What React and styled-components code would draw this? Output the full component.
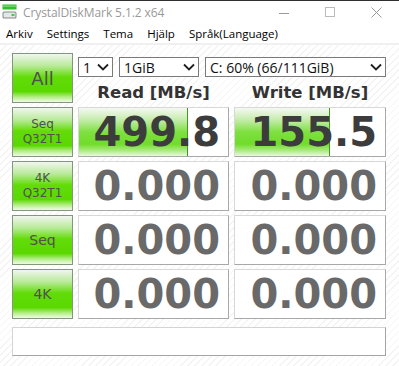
import styled, { createGlobalStyle } from "styled-components";

const GlobalStyle = createGlobalStyle`
  html, body {
    margin: 0;
    padding: 0;
    background: #ffffff;
    overflow: hidden;
  }
`;

const rows = [
  { label: ["Seq", "Q32T1"], read: "499.8", readPct: 73, write: "155.5", writePct: 63 },
  { label: ["4K", "Q32T1"], read: "0.000", readPct: 0, write: "0.000", writePct: 0 },
  { label: ["Seq"], read: "0.000", readPct: 0, write: "0.000", writePct: 0 },
  { label: ["4K"], read: "0.000", readPct: 0, write: "0.000", writePct: 0 },
];

const App = () => {
  return (
    <Window>
      <GlobalStyle />
      <TitleBar>
        <AppIcon viewBox="0 0 16 16">
          <rect x="0.5" y="0.5" width="14" height="5" fill="#2fbf2f" />
          <rect x="0.5" y="1.5" width="14" height="1.2" fill="#7fe07f" />
          <rect x="0.5" y="7.5" width="14" height="7" rx="1.5" fill="#8a8a8a" />
          <rect x="1.5" y="8.5" width="12" height="5" rx="1" fill="#e6e6e6" />
          <rect x="9.5" y="10" width="3" height="2" fill="#3ccf3c" />
        </AppIcon>
        <Title>CrystalDiskMark 5.1.2 x64</Title>
        <Controls>
          <CtrlBtn>
            <svg width="11" height="11" viewBox="0 0 11 11">
              <line x1="0" y1="6.5" x2="10" y2="6.5" stroke="#999" strokeWidth="1" />
            </svg>
          </CtrlBtn>
          <CtrlBtn>
            <svg width="11" height="11" viewBox="0 0 11 11">
              <rect x="0.5" y="0.5" width="9" height="9" fill="none" stroke="#bbb" strokeWidth="1" />
            </svg>
          </CtrlBtn>
          <CtrlBtn>
            <svg width="11" height="11" viewBox="0 0 11 11">
              <path d="M0.5 0.5 L10.5 10.5 M10.5 0.5 L0.5 10.5" stroke="#999" strokeWidth="1" />
            </svg>
          </CtrlBtn>
        </Controls>
      </TitleBar>
      <MenuBar>
        <MenuItem>Arkiv</MenuItem>
        <MenuItem>Settings</MenuItem>
        <MenuItem>Tema</MenuItem>
        <MenuItem>Hjälp</MenuItem>
        <MenuItem>Språk(Language)</MenuItem>
      </MenuBar>
      <Main>
        <Grid>
          <TestButton $size={18}>All</TestButton>
          <HeadArea>
            <Pickers>
              <Picker $w={35}>
                <span>1</span>
                <Chevron />
              </Picker>
              <Picker $w={80}>
                <span>1GiB</span>
                <Chevron />
              </Picker>
              <Picker $w={181}>
                <span>C: 60% (66/111GiB)</span>
                <Chevron />
              </Picker>
            </Pickers>
            <Heads>
              <Head>Read [MB/s]</Head>
              <Head>Write [MB/s]</Head>
            </Heads>
          </HeadArea>
          {rows.map((r, i) => (
            <Row key={i} r={r} />
          ))}
        </Grid>
        <StatusBar />
      </Main>
    </Window>
  );
};

const Row = ({ r }) => (
  <>
    <TestButton $size={r.label.length > 1 ? 12 : 14}>
      {r.label.map((l) => (
        <span key={l}>{l}</span>
      ))}
    </TestButton>
    <ValueBox>
      {r.readPct > 0 && <Fill style={{ width: `${r.readPct}%` }} />}
      <Value $active={r.readPct > 0}>{r.read}</Value>
    </ValueBox>
    <ValueBox>
      {r.writePct > 0 && <Fill style={{ width: `${r.writePct}%` }} />}
      <Value $active={r.writePct > 0}>{r.write}</Value>
    </ValueBox>
  </>
);

const Chevron = () => (
  <ChevronSvg width="12" height="8" viewBox="0 0 12 8">
    <path d="M1 1.5 L6 6.5 L11 1.5" fill="none" stroke="#1e1e1e" strokeWidth="1.8" />
  </ChevronSvg>
);

export default App;

const Window = styled.div`
  width: 399px;
  height: 366px;
  display: flex;
  flex-direction: column;
  background: #fff;
  font-family: "Open Sans", "Noto Sans", sans-serif;
`;

const TitleBar = styled.div`
  height: 23px;
  border-top: 1px solid #2f2f2f;
  display: flex;
  align-items: center;
  padding-left: 2px;
  box-sizing: border-box;
`;

const AppIcon = styled.svg`
  width: 16px;
  height: 16px;
`;

const Title = styled.div`
  margin-left: 5px;
  font-size: 12px;
  color: #999;
  letter-spacing: -0.1px;
`;

const Controls = styled.div`
  margin-left: auto;
  display: flex;
  height: 100%;
`;

const CtrlBtn = styled.div`
  width: 46px;
  display: flex;
  align-items: center;
  justify-content: center;
`;

const MenuBar = styled.div`
  height: 20px;
  display: flex;
  align-items: center;
  gap: 14px;
  padding-left: 6px;
  border-bottom: 2px solid #f0f0f0;
`;

const MenuItem = styled.div`
  font-size: 11.5px;
  color: #000;
`;

const Main = styled.div`
  flex: 1;
  padding: 8px 13px 0 12px;
  background: repeating-linear-gradient(135deg, #ffffff 0 4px, #f4f4f4 4px 5px);
`;

const Grid = styled.div`
  display: grid;
  grid-template-columns: 61px 151px 152px;
  grid-auto-rows: 50px;
  column-gap: 5px;
  row-gap: 4px;
`;

const TestButton = styled.div`
  box-sizing: border-box;
  border: 1px solid #82977e;
  background: linear-gradient(
    to bottom,
    #f2f6f0 0%,
    #b8ea98 25%,
    #62dc08 48%,
    #5ad800 78%,
    #b6ee8a 90%,
    #f0fae8 100%
  );
  display: flex;
  flex-direction: column;
  align-items: center;
  justify-content: center;
  color: #505050;
  font-family: "DejaVu Sans", sans-serif;
  font-size: ${(p) => p.$size}px;
  line-height: 15px;
  span {
    display: block;
  }
`;

const HeadArea = styled.div`
  grid-column: 2 / 4;
  display: flex;
  flex-direction: column;
`;

const Pickers = styled.div`
  margin-top: 4px;
  display: flex;
  gap: 6px;
`;

const Picker = styled.div`
  box-sizing: border-box;
  width: ${(p) => p.$w}px;
  height: 20px;
  border: 1px solid #7a7a7a;
  background: #fff;
  display: flex;
  align-items: center;
  padding: 0 3px 0 4px;
  font-size: 14px;
  color: #111;
  span {
    flex: 1;
    white-space: nowrap;
  }
`;

const ChevronSvg = styled.svg`
  flex: none;
`;

const Heads = styled.div`
  display: grid;
  grid-template-columns: 151px 152px;
  column-gap: 5px;
  margin-top: 5px;
`;

const Head = styled.div`
  text-align: center;
  font-family: "DejaVu Sans", sans-serif;
  font-weight: bold;
  font-size: 16.5px;
  line-height: 22px;
  color: #333;
`;

const ValueBox = styled.div`
  position: relative;
  box-sizing: border-box;
  border-top: 1px solid #d8d8d8;
  border-left: 1px solid #d8d8d8;
  border-right: 1px solid #a8a8a8;
  border-bottom: 1px solid #a8a8a8;
  background: #fff;
  display: flex;
  align-items: center;
  justify-content: flex-end;
  padding-right: 8px;
  overflow: hidden;
`;

const Fill = styled.div`
  position: absolute;
  left: 0;
  top: 0;
  bottom: 0;
  box-sizing: border-box;
  border-right: 1px solid #3f9a1c;
  background: linear-gradient(
    to bottom,
    #f6f8f4 0%,
    #c4ecaa 25%,
    #7ee040 50%,
    #70dc2a 75%,
    #a8ea7c 88%,
    #eaf8e0 100%
  );
`;

const Value = styled.div`
  position: relative;
  font-family: "DejaVu Sans", sans-serif;
  font-weight: bold;
  font-size: 40px;
  line-height: 48px;
  color: ${(p) => (p.$active ? "#3c3c3c" : "#696969")};
`;

const StatusBar = styled.div`
  box-sizing: border-box;
  margin-top: 8px;
  width: 374px;
  height: 29px;
  border-top: 1px solid #d4d4d4;
  border-left: 1px solid #d4d4d4;
  border-right: 1px solid #a4a4a4;
  border-bottom: 1px solid #a4a4a4;
  background: #fff;
`;
